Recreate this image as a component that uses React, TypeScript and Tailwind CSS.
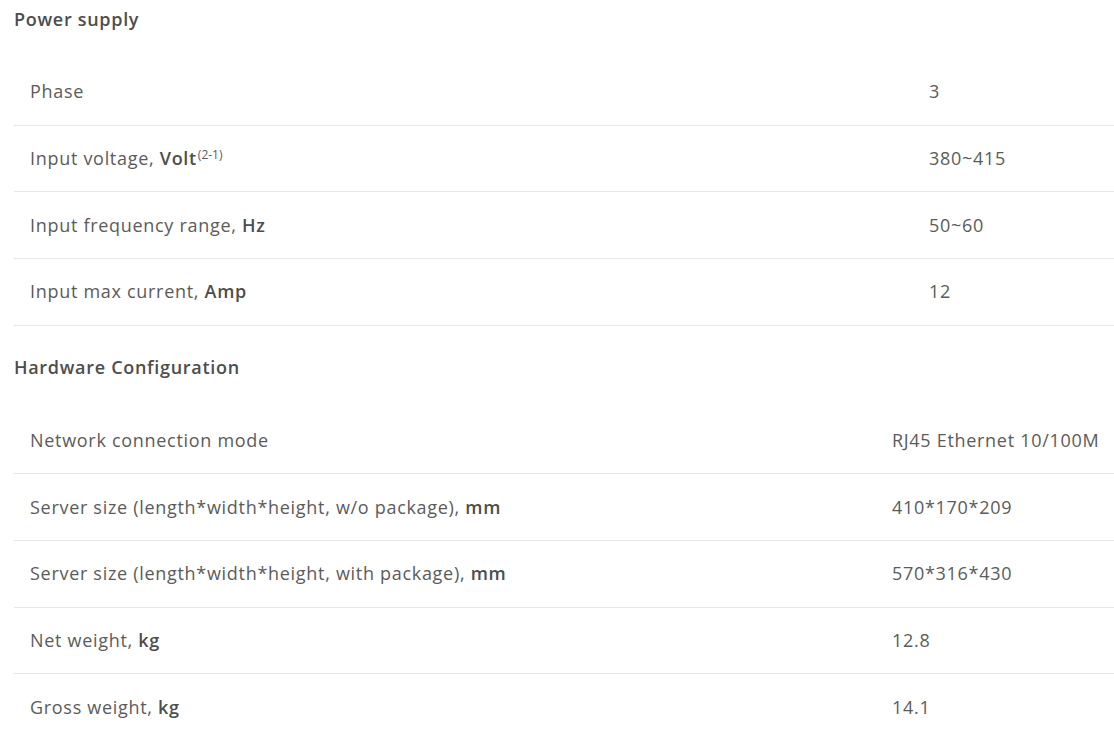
type Row = { label: string; unit?: string; sup?: string; value: string };

const power: Row[] = [
  { label: 'Phase', value: '3' },
  { label: 'Input voltage, ', unit: 'Volt', sup: '(2-1)', value: '380~415' },
  { label: 'Input frequency range, ', unit: 'Hz', value: '50~60' },
  { label: 'Input max current, ', unit: 'Amp', value: '12' },
];

const hardware: Row[] = [
  { label: 'Network connection mode', value: 'RJ45 Ethernet 10/100M' },
  { label: 'Server size (length*width*height, w/o package), ', unit: 'mm', value: '410*170*209' },
  { label: 'Server size (length*width*height, with package), ', unit: 'mm', value: '570*316*430' },
  { label: 'Net weight, ', unit: 'kg', value: '12.8' },
  { label: 'Gross weight, ', unit: 'kg', value: '14.1' },
];

function SpecTable({ rows, labelWidth }: { rows: Row[]; labelWidth: string }) {
  return (
    <div className="flex flex-col">
      {rows.map((r, i) => (
        <div key={i} className="flex h-[66.67px] items-center border-b border-[#e6e6e6]">
          <div className={`${labelWidth} shrink-0 pl-4 whitespace-nowrap`}>
            {r.label}
            {r.unit && <b className="font-semibold text-[#4d4d4d]">{r.unit}</b>}
            {r.sup && <sup className="text-[12px] ml-px -top-[6px] tracking-normal">{r.sup}</sup>}
          </div>
          <div className="pl-4 whitespace-nowrap">{r.value}</div>
        </div>
      ))}
    </div>
  );
}

export default function App() {
  return (
    <div className="bg-white pl-[14px] text-[18px] tracking-[0.7px] text-[#5b5b5b] font-['Open_Sans',sans-serif] overflow-hidden h-[736px]">
      <h3 className="h-[38px] flex items-center font-semibold text-[18px] text-[#4d4d4d]">Power supply</h3>
      <div className="mt-[21px]">
        <SpecTable rows={power} labelWidth="w-[899px]" />
      </div>
      <h3 className="mt-[23px] h-[38px] flex items-center font-semibold text-[18px] text-[#4d4d4d]">
        Hardware Configuration
      </h3>
      <div className="mt-[21px]">
        <SpecTable rows={hardware} labelWidth="w-[862px]" />
      </div>
    </div>
  );
}
